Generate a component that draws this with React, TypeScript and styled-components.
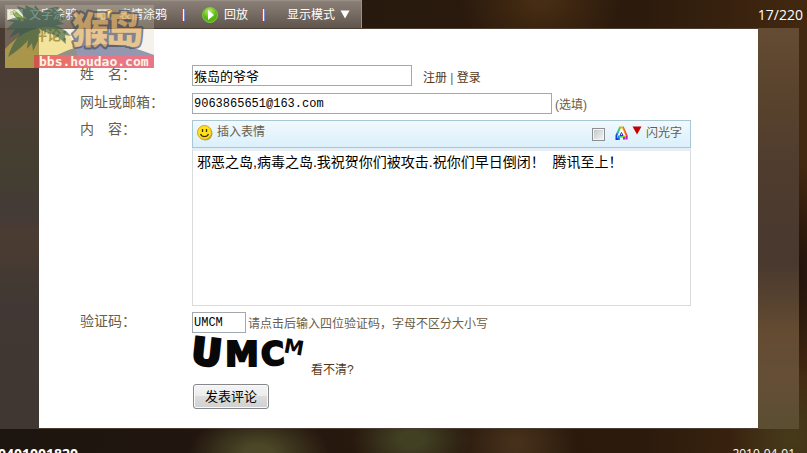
import React from "react";
import styled, { createGlobalStyle } from "styled-components";

const Global = createGlobalStyle`
  * { box-sizing: border-box; }
  html, body { margin: 0; padding: 0; }
  body {
    font-family: "Liberation Sans", "Noto Sans CJK SC", sans-serif;
    font-size: 12px;
    color: #6b5c45;
    overflow: hidden;
  }
`;

const Page = styled.div`
  position: relative;
  height: 100vh;
  display: flex;
  flex-direction: column;
  overflow: hidden;
  background:
    radial-gradient(ellipse 70px 40px at 32% 100%, #4b4727 20%, transparent),
    radial-gradient(ellipse 60px 40px at 51% 97%, #414023 20%, transparent),
    radial-gradient(ellipse 60px 50px at 64% 98%, #46301a 10%, transparent),
    radial-gradient(ellipse 80px 60px at 67% 0%, #462c12 10%, transparent),
    radial-gradient(ellipse 60px 70px at 98% 96%, #45391a 10%, transparent),
    radial-gradient(ellipse 60px 110px at 98% 60%, #21120b 10%, transparent),
    linear-gradient(90deg, #1d1510 0, #21150f 22%, #28190e 45%, #2c1b0c 80%, #432810 100%);
`;

const Header = styled.header`
  display: flex;
  justify-content: space-between;
  height: 28px;
  flex: none;
`;

const Toolbar = styled.nav`
  display: flex;
  align-items: center;
  padding: 0 11px 0 7px;
  background: linear-gradient(#8a8078, #756b63 50%, #5f554d);
  border-right: 1px solid #9b9188;
  border-top: 1px solid #978e85;
`;

const ToolButton = styled.button<{ $gap?: number }>`
  display: flex;
  align-items: center;
  gap: ${(p) => p.$gap ?? 5}px;
  border: 0;
  padding: 0;
  background: none;
  color: #fff;
  font: inherit;
  line-height: 18px;
  white-space: nowrap;
`;

const Separator = styled.span<{ $before: number; $after: number }>`
  width: 3px;
  height: 12px;
  flex: none;
  margin: 0 ${(p) => p.$after}px 0 ${(p) => p.$before}px;
  background: linear-gradient(90deg, #b0646e 0 1px, #ffffff 1px 2px, #7d8cc4 2px);
`;

const Spacer = styled.span`
  width: 20px;
`;

const Counter = styled.span`
  padding: 5px 4px 0 0;
  color: #fff;
  font: 14px/20px "Open Sans", sans-serif;
`;

const Frame = styled.main`
  flex: none;
  margin-right: 8px;
  padding: 1px 41px 1px 39px;
  background:
    linear-gradient(#483a30, #4a3d33 20%, #443f30 33%, #433b36 45%, #4a3c32 52%, #403834 70%, #403733) left / 39px 100% no-repeat,
    linear-gradient(#634b34, #5b442d 15%, #4f3c2f 35%, #48382e 58%, #644b32 76%, #654e37 88%, #5b4e31) right / 41px 100% no-repeat,
    #4c3d32;
`;

const Panel = styled.section`
  background: #fff;
  padding-bottom: 19px;
`;

const Title = styled.h1`
  margin: 0 0 0 -6px;
  padding-bottom: 24px;
  font-size: 14px;
  line-height: 12px;
  color: #4d402d;
  font-weight: 700;
`;

const Form = styled.form`
  display: grid;
  grid-template-columns: 112px minmax(0, 1fr);
  row-gap: 6px;
  padding-left: 41px;
`;

const Label = styled.label`
  font-size: 14px;
  line-height: 18px;
  color: #6b5c45;
`;

const Line = styled.div`
  display: flex;
  align-items: flex-start;
`;

const TextInput = styled.input<{ $width: number; $cjk?: boolean }>`
  width: ${(p) => p.$width}px;
  height: 21px;
  flex: none;
  padding: 0 1px;
  border: 1px solid #a3a8ac;
  border-radius: 0;
  background: #fff;
  color: #000;
  font: ${(p) => (p.$cjk ? 13 : 12)}px "Liberation Mono", "Noto Sans CJK SC", monospace;
  outline: 0;
`;

const Note = styled.span<{ $left: number; $top?: number }>`
  margin-left: ${(p) => p.$left}px;
  padding-top: ${(p) => p.$top ?? 3}px;
  line-height: 18px;
  white-space: nowrap;
`;

const Link = styled.a`
  color: #553719;
  text-decoration: none;
`;

const Editor = styled.div`
  width: 499px;
  max-width: calc(100% - 20px);
`;

const EditorBar = styled.div`
  display: flex;
  align-items: center;
  justify-content: space-between;
  height: 28px;
  padding: 0 8px 0 4px;
  border: 1px solid #a9c6d3;
  background: linear-gradient(#f0f9fe, #dbf0fb);
`;

const BarButton = styled.button`
  display: flex;
  align-items: center;
  gap: 4px;
  border: 0;
  padding: 0 0 4px;
  background: none;
  color: #6b5c45;
  font: inherit;
  line-height: 18px;

  svg { margin-top: 2px; }
`;

const BarGroup = styled.label`
  display: flex;
  align-items: center;
  line-height: 18px;
  padding-bottom: 3px;

  svg { margin-left: 10px; }
  svg + svg { margin: 0 4px 4px; }
`;

const Check = styled.input`
  appearance: none;
  width: 13px;
  height: 13px;
  margin: 4px 0 0;
  border: 1px solid #8c9093;
  background: linear-gradient(135deg, #bfc3c6, #f7f7f7);
  box-shadow: inset 0 0 0 1px #f4f4f4;
`;

const Message = styled.textarea`
  display: block;
  width: 100%;
  height: 158px;
  padding: 1px 4px;
  border: 1px solid #d9dcdf;
  border-top: 3px solid #e6eff5;
  resize: none;
  outline: 0;
  color: #000;
  font: 14px/20px "Liberation Sans", "Noto Sans CJK SC", sans-serif;
`;

const CodeColumn = styled.div`
  display: flex;
  flex-direction: column;
  align-items: flex-start;
`;

const CaptchaLine = styled.div`
  display: flex;
  align-items: flex-end;
  height: 46px;
  gap: 4px;
  line-height: 18px;
`;

const Submit = styled.button`
  margin: 5px 0 0 1px;
  width: 76px;
  height: 25px;
  padding: 0 0 3px;
  border: 1px solid #85878a;
  border-radius: 3px;
  background: linear-gradient(#f4f4f4, #ececec 48%, #dcdcdc 50%, #d0d0d0);
  box-shadow: inset 0 0 0 1px #fafafa;
  color: #000;
  font: 13px "Noto Sans CJK SC", sans-serif;
`;

const Footer = styled.footer`
  display: flex;
  justify-content: space-between;
  flex: 1;
  min-height: 0;
  overflow: hidden;
  padding: 15px 12px 0 0;
  color: #fff;
  font: 12px/20px "Open Sans", sans-serif;
`;

const Serial = styled.strong`
  margin-left: -2px;
  font-size: 14px;
`;

const Watermark = styled.svg`
  position: absolute;
  left: 5px;
  top: 5px;
  pointer-events: none;
`;

const NoteIcon = () => (
  <svg width="17" height="14" viewBox="0 0 17 14" aria-hidden="true">
    <rect x="0.5" y="1.5" width="15" height="10" fill="#f4f4e6" stroke="#d8d8c8" />
    <path d="M3 4h5M3 6h4" stroke="#a7b88c" />
    <path d="M6 3l2 0 8 7-2 3-7-6z" fill="#6fae2f" stroke="#447b21" />
    <path d="M6 3l3 0-2 3z" fill="#f5d28b" />
    <path d="M13 12l3-3 1 3-2 2z" fill="#e6bc28" />
  </svg>
);

const FaceIcon = () => (
  <svg width="17" height="14" viewBox="0 0 17 14" aria-hidden="true">
    <rect x="0.5" y="1.5" width="14" height="10" fill="#f1efe8" stroke="#d5d0c8" />
    <path d="M6 6l4-3 6-2-1 6-4 5-5-3z" fill="#e9a72e" stroke="#9b6a22" />
    <path d="M5 3l3 3M13 3l-4 6" stroke="#f7edb9" strokeWidth="2" />
    <path d="M6 11l3-3 2 3z" fill="#fff" />
  </svg>
);

const PlayIcon = () => (
  <svg width="16" height="16" viewBox="0 0 16 16" aria-hidden="true">
    <defs>
      <radialGradient id="play" cx="45%" cy="25%">
        <stop offset="0" stopColor="#b9f25d" />
        <stop offset="1" stopColor="#56b414" />
      </radialGradient>
    </defs>
    <circle cx="8" cy="8" r="7.5" fill="url(#play)" stroke="#7cc83a" />
    <path d="M6 3v10l6-5z" fill="#fff" />
  </svg>
);

const Smiley = () => (
  <svg width="16" height="16" viewBox="0 0 16 16" aria-hidden="true">
    <circle cx="8.5" cy="8.5" r="7" fill="#b99b56" />
    <circle cx="7.5" cy="7.5" r="7" fill="#ffe11c" stroke="#d5a415" />
    <path d="M5.5 4v3M9.5 4v3M3.5 9c1.5 3.5 6.5 3.5 8 0" fill="none" stroke="#3e3205" strokeWidth="1.3" />
  </svg>
);

const RainbowA = () => (
  <svg width="13" height="14" viewBox="0 0 13 14" aria-hidden="true">
    <defs>
      <linearGradient id="rainbow" x1="0" y1="0.8" x2="1" y2="0.4">
        <stop offset="0" stopColor="#1636e0" />
        <stop offset="0.25" stopColor="#19b8e6" />
        <stop offset="0.5" stopColor="#53d321" />
        <stop offset="0.75" stopColor="#f6b91d" />
        <stop offset="1" stopColor="#e92222" />
      </linearGradient>
    </defs>
    <path d="M1.5 13V9.5L5 1.5h3l3.5 8V13H9v-2.5H4V13z" fill="#fff" stroke="url(#rainbow)" strokeWidth="2" />
    <path d="M9 13v-2M11.5 13v-3" stroke="#c022d6" strokeWidth="2" />
    <path d="M5 9.5l1.5-3 1.5 3z" fill="none" stroke="#4523c8" />
  </svg>
);

const Arrow = ({ color }: { color: string }) => (
  <svg width="10" height="9" viewBox="0 0 10 9" aria-hidden="true">
    <path d="M0.5 0.5h9L5 8.5z" fill={color} />
  </svg>
);

const Captcha = () => (
  <svg width="115" height="46" viewBox="0 0 115 46" role="img" aria-label="验证码 UMCM">
    <g fontFamily="DejaVu Sans, sans-serif" fontWeight="700" fill="#080808" stroke="#080808">
      <text x="0" y="32" fontSize="37" transform="rotate(6 14 18)" strokeWidth="3">U</text>
      <text x="33" y="33" fontSize="34" strokeWidth="2">M</text>
      <text x="69" y="32" fontSize="32" transform="rotate(-4 80 20)" strokeWidth="2">C</text>
      <text x="92" y="21" fontSize="20" transform="rotate(10 102 14)" strokeWidth="0">M</text>
    </g>
  </svg>
);

const Logo = () => (
  <Watermark width="149" height="63" viewBox="0 0 149 63" role="img" aria-label="猴岛 bbs.houdao.com">
    <rect width="149" height="63" fill="#d9d2b6" opacity="0.28" />
    <path d="M0 63V44Q20 22 44 22T72 50v13z" fill="#f2d23e" opacity="0.45" />
    <path d="M52 50Q95 28 149 50z" fill="#313b75" opacity="0.5" />
    <g fill="#2f5a48" opacity="0.6">
      <path d="M33 23Q12 22 3 52Q18 42 24 34L36 27z" />
      <path d="M33 23Q18 6 2 16l7 1-8 8 9-1-6 9 11-6-2 7 12-9z" />
      <path d="M31 22Q14 8 12 1l9 3-1-4 9 4 1-4 7 8z" />
      <path d="M31 22Q34 2 54 2l-3 4 8 0-5 5 9 2-9 3 5 3-17 3z" />
      <path d="M32 22Q52 14 66 31l-6-1 1 9-7-6-6-4-8-2z" />
      <path d="M31 23Q22 30 22 44l5-6 1 8 5-10 1-13z" />
    </g>
    <g
      fontFamily="Noto Sans CJK SC, sans-serif"
      fontWeight="900"
      fontSize="37"
      fill="#e0ad60"
      stroke="#42475a"
      strokeWidth="4"
      paintOrder="stroke"
      strokeLinejoin="round"
      opacity="0.64"
    >
      <text x="67" y="39">猴</text>
      <text x="101" y="39">岛</text>
    </g>
    <rect x="29" y="50" width="120" height="13" fill="#e33351" opacity="0.65" />
    <text x="34" y="61" fontFamily="DejaVu Sans Mono, monospace" fontWeight="700" fontSize="13" fill="#fff4e4">
      bbs.houdao.com
    </text>
  </Watermark>
);

export default function App() {
  return (
    <>
      <Global />
      <Page>
        <Header>
          <Toolbar>
            <ToolButton><NoteIcon />文字涂鸦</ToolButton>
            <Spacer />
            <ToolButton><FaceIcon />表情涂鸦</ToolButton>
            <Separator $before={15} $after={17} />
            <ToolButton $gap={6}><PlayIcon />回放</ToolButton>
            <Separator $before={14} $after={22} />
            <ToolButton>显示模式<Arrow color="#fff" /></ToolButton>
          </Toolbar>
          <Counter>17/220</Counter>
        </Header>
        <Frame>
          <Panel>
            <Title>评论：</Title>
            <Form onSubmit={(e) => e.preventDefault()}>
              <Label htmlFor="name">姓　名：</Label>
              <Line>
                <TextInput id="name" $width={220} $cjk defaultValue="猴岛的爷爷" />
                <Note $left={11} $top={4}>
                  <Link href="#register">注册</Link> | <Link href="#login">登录</Link>
                </Note>
              </Line>
              <Label htmlFor="contact">网址或邮箱：</Label>
              <Line>
                <TextInput id="contact" $width={360} defaultValue="9063865651@163.com" />
                <Note $left={3}>(选填)</Note>
              </Line>
              <Label htmlFor="message">内　容：</Label>
              <Editor>
                <EditorBar>
                  <BarButton type="button"><Smiley />插入表情</BarButton>
                  <BarGroup>
                    <Check type="checkbox" />
                    <RainbowA />
                    <Arrow color="#c90000" />
                    闪光字
                  </BarGroup>
                </EditorBar>
                <Message
                  id="message"
                  spellCheck={false}
                  defaultValue="邪恶之岛,病毒之岛.我祝贺你们被攻击.祝你们早日倒闭！  腾讯至上！"
                />
              </Editor>
              <Label htmlFor="code">验证码：</Label>
              <CodeColumn>
                <Line>
                  <TextInput id="code" $width={54} defaultValue="UMCM" />
                  <Note $left={2}>请点击后输入四位验证码，字母不区分大小写</Note>
                </Line>
                <CaptchaLine>
                  <Captcha />
                  <Link href="#refresh">看不清?</Link>
                </CaptchaLine>
                <Submit type="submit">发表评论</Submit>
              </CodeColumn>
            </Form>
          </Panel>
        </Frame>
        <Footer>
          <Serial>0401001820</Serial>
          <span>2010-04-01</span>
        </Footer>
        <Logo />
      </Page>
    </>
  );
}
